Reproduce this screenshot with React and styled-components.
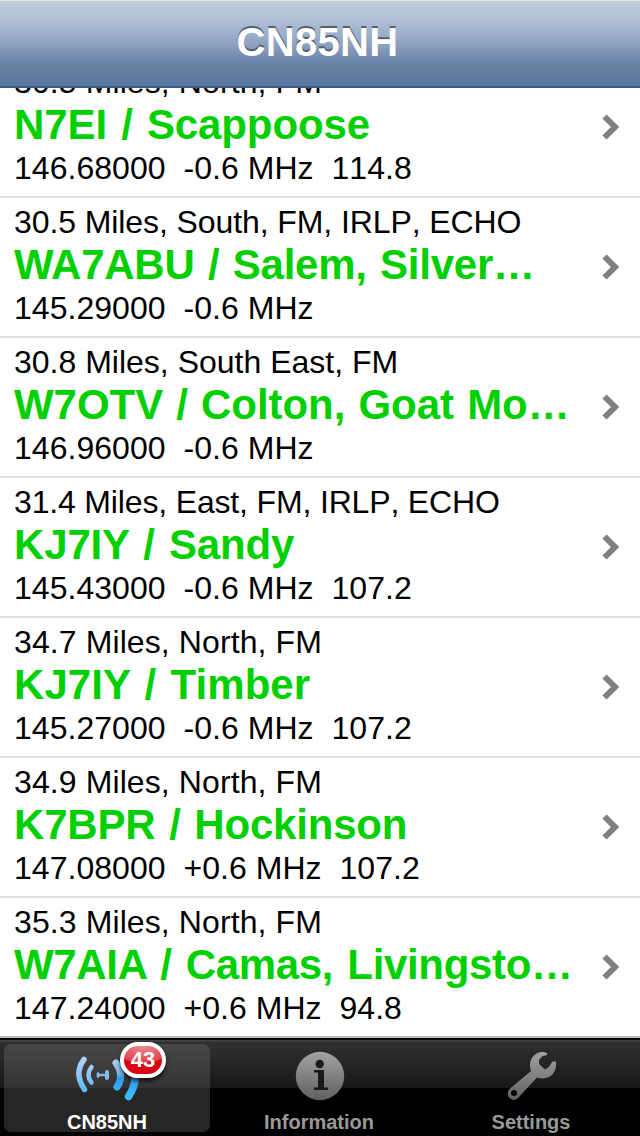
import React from "react";
import styled, { createGlobalStyle } from "styled-components";

const GlobalStyle = createGlobalStyle`
  * { box-sizing: border-box; }
  body { margin: 0; background: #fff; font-family: "Liberation Sans", Arial, Helvetica, sans-serif; }
`;

const Screen = styled.div`
  width: 640px;
  height: 1136px;
  display: flex;
  flex-direction: column;
  overflow: hidden;
  background: #fff;
`;

const NavBar = styled.header`
  flex: none;
  height: 88px;
  padding: 0 5px 3px 0;
  display: flex;
  align-items: center;
  justify-content: center;
  border-top: 1px solid #dfe8ed;
  border-bottom: 2px solid #3d5b85;
  background: linear-gradient(#c0cddd 0%, #b0c0d6 23%, #8fa3c2 50%, #6b83a8 72%, #637e9e 82%, #5a769f 100%);
`;

const Title = styled.h1`
  margin: 0;
  font-size: 40px;
  line-height: 46px;
  font-weight: bold;
  letter-spacing: 0.3px;
  color: #fff;
  text-shadow: 0 -2px 0 #535f70;
`;

const List = styled.main`
  flex: 1;
  min-height: 0;
  display: flex;
  flex-direction: column;
  justify-content: flex-end;
  overflow: hidden;
`;

const Row = styled.article`
  flex: none;
  height: ${(p) => (p.$last ? 138 : 140)}px;
  padding: 4px 19px 0 14px;
  display: flex;
  justify-content: space-between;
  border-bottom: ${(p) => (p.$last ? "0" : "2px solid #e0e0e0")};
`;

const Line = styled.div`
  font-size: 32px;
  line-height: 40px;
  color: #000;
  white-space: pre;
  font-kerning: none;
  letter-spacing: ${(p) => p.$spacing || 0}px;
`;

const Name = styled.div`
  font-size: 42px;
  line-height: 46px;
  font-weight: bold;
  color: #00d000;
  white-space: pre;
  letter-spacing: ${(p) => p.$spacing || 0}px;
  word-spacing: ${(p) => p.$gap || 0}px;
`;

const Chevron = styled.svg`
  width: 20px;
  height: 28px;
  margin-top: 51px;
`;

const TabBar = styled.nav`
  flex: none;
  height: 100px;
  padding: 6px 2px 4px 4px;
  display: flex;
  gap: 6px;
  border-top: 2px solid #b9b9b9;
  background: linear-gradient(#090909 0 2px, #424242 2px 3px, #303030 4px, #171717 50px, #000 50px);
`;

const Tab = styled.button`
  flex: 0 0 206px;
  height: 88px;
  padding: 0;
  border: 0;
  border-radius: 7px;
  display: flex;
  flex-direction: column;
  align-items: center;
  font-family: inherit;
  background: ${(p) => (p.$active ? "linear-gradient(#474747, #333 44px, #262626 44px)" : "none")};
  color: ${(p) => (p.$active ? "#fff" : "#999")};
`;

const IconSlot = styled.span`
  position: relative;
  height: 64px;
  width: 64px;
  padding-top: 8px;
  display: flex;
  justify-content: center;
`;

const TabIcon = styled.svg`
  width: 64px;
  height: 52px;
  overflow: visible;
`;

const TabLabel = styled.span`
  font-size: 20px;
  line-height: 23px;
  margin-top: 3px;
  margin-bottom: -2px;
  font-weight: bold;
`;

const Badge = styled.span`
  position: absolute;
  left: 45px;
  top: -2px;
  width: 46px;
  height: 36px;
  border: 4px solid #fff;
  border-radius: 18px;
  display: flex;
  align-items: center;
  justify-content: center;
  font-size: 22px;
  line-height: 26px;
  font-weight: bold;
  color: #fff;
  background: radial-gradient(ellipse 30px 17px at 50% 0, #ed8d93 0, #e1434d 95%, #d90513 100%);
  box-shadow: 0 3px 4px rgba(0, 0, 0, 0.7);
`;

const stations = [
  { info: "30.5 Miles, North, FM", name: "N7EI / Scappoose", freq: "146.68000  -0.6 MHz  114.8", infoSpacing: 0.1, nameSpacing: -0.1, gap: 2.6 },
  { info: "30.5 Miles, South, FM, IRLP, ECHO", name: "WA7ABU / Salem, Silver…", freq: "145.29000  -0.6 MHz", infoSpacing: -0.09, nameSpacing: -0.25, gap: 2 },
  { info: "30.8 Miles, South East, FM", name: "W7OTV / Colton, Goat Mo…", freq: "146.96000  -0.6 MHz", nameSpacing: -0.04, gap: 1.5 },
  { info: "31.4 Miles, East, FM, IRLP, ECHO", name: "KJ7IY / Sandy", freq: "145.43000  -0.6 MHz  107.2", infoSpacing: -0.16, nameSpacing: -0.15, gap: 2.6 },
  { info: "34.7 Miles, North, FM", name: "KJ7IY / Timber", freq: "145.27000  -0.6 MHz  107.2", infoSpacing: 0.1, nameSpacing: 0.05, gap: 2.6 },
  { info: "34.9 Miles, North, FM", name: "K7BPR / Hockinson", freq: "147.08000  +0.6 MHz  107.2", infoSpacing: 0.1, nameSpacing: -0.2, gap: 2.3 },
  { info: "35.3 Miles, North, FM", name: "W7AIA / Camas, Livingsto…", freq: "147.24000  +0.6 MHz  94.8", infoSpacing: 0.1, nameSpacing: -0.33, gap: 2.8 },
];

function RepeaterIcon() {
  return (
    <TabIcon viewBox="0 0 64 52" fill="none" strokeLinecap="round">
      <defs>
        <linearGradient id="blue" gradientUnits="userSpaceOnUse" x1="0" y1="6" x2="0" y2="46">
          <stop offset="0" stopColor="#b3d3f3" />
          <stop offset="0.4" stopColor="#77b9ed" />
          <stop offset="0.5" stopColor="#2f9cec" />
          <stop offset="1" stopColor="#3dbcfa" />
        </linearGradient>
        <linearGradient id="pale" gradientUnits="userSpaceOnUse" x1="0" y1="6" x2="0" y2="40">
          <stop offset="0" stopColor="#b5d2f1" />
          <stop offset="0.65" stopColor="#7fc1f1" />
          <stop offset="1" stopColor="#50bdf8" />
        </linearGradient>
      </defs>
      <path d="M9 7.500Q-1.500 21 9.500 37.500" stroke="url(#pale)" strokeWidth="5.500" />
      <path d="M16.500 15Q10.500 23 16.500 30.500" stroke="url(#pale)" strokeWidth="4.500" />
      <path d="M23 23H33" stroke="#82b9e8" strokeWidth="2.500" />
      <path d="M23 21.500V24.500" stroke="#83bbe9" strokeWidth="2.500" />
      <path d="M32 20V26" stroke="#83bbe9" strokeWidth="4" />
      <path d="M41 11Q50 23 42 35" stroke="url(#blue)" strokeWidth="7" />
      <path d="M53 3Q67 25 53.500 44.500" stroke="url(#blue)" strokeWidth="7.500" />
    </TabIcon>
  );
}

function InfoIcon() {
  return (
    <TabIcon viewBox="0 0 64 52">
      <defs>
        <linearGradient id="gray" gradientUnits="userSpaceOnUse" x1="0" y1="0" x2="0" y2="50">
          <stop offset="0" stopColor="#a2a2a2" />
          <stop offset="1" stopColor="#5d5d5d" />
        </linearGradient>
      </defs>
      <circle cx="33" cy="24" r="24.200" fill="url(#gray)" />
      <circle cx="32.700" cy="12" r="4.200" fill="#1b1b1b" />
      <path d="M27 18H37V35.500H41V38H27V35.500H31V20.500H27Z" fill="#191919" />
    </TabIcon>
  );
}

function WrenchIcon() {
  return (
    <TabIcon viewBox="0 0 64 52">
      <path
        fill="url(#gray)"
        fillRule="evenodd"
        d="M48 1Q43-1 37.500 1.500Q30.500 6 31 14Q31.500 17 32 19L11 36.500Q7 41 10 45.500Q14 50 19 46L38 25.500Q44 28 51 24.500Q58 20 57 9.500L53.500 9.500L50 15L46 17.500L40 12V8L43 4.500L48 3ZM12 41Q12 38 15 38Q18 38 18 41Q18 44 15 44Q12 44 12 41Z"
      />
    </TabIcon>
  );
}

export default function App() {
  return (
    <Screen>
      <GlobalStyle />
      <NavBar>
        <Title>CN85NH</Title>
      </NavBar>
      <List>
        {stations.map((s, i) => (
          <Row key={s.name} $last={i === stations.length - 1}>
            <div>
              <Line $spacing={s.infoSpacing}>{s.info}</Line>
              <Name $spacing={s.nameSpacing} $gap={s.gap}>{s.name}</Name>
              <Line $spacing={0.04}>{s.freq}</Line>
            </div>
            <Chevron viewBox="0 0 20 28">
              <path d="M3.500 3.500L14 14L3.500 24.500" fill="none" stroke="#808080" strokeWidth="6" />
            </Chevron>
          </Row>
        ))}
      </List>
      <TabBar>
        <Tab $active>
          <IconSlot>
            <RepeaterIcon />
            <Badge>43</Badge>
          </IconSlot>
          <TabLabel>CN85NH</TabLabel>
        </Tab>
        <Tab>
          <IconSlot>
            <InfoIcon />
          </IconSlot>
          <TabLabel>Information</TabLabel>
        </Tab>
        <Tab>
          <IconSlot>
            <WrenchIcon />
          </IconSlot>
          <TabLabel>Settings</TabLabel>
        </Tab>
      </TabBar>
    </Screen>
  );
}
